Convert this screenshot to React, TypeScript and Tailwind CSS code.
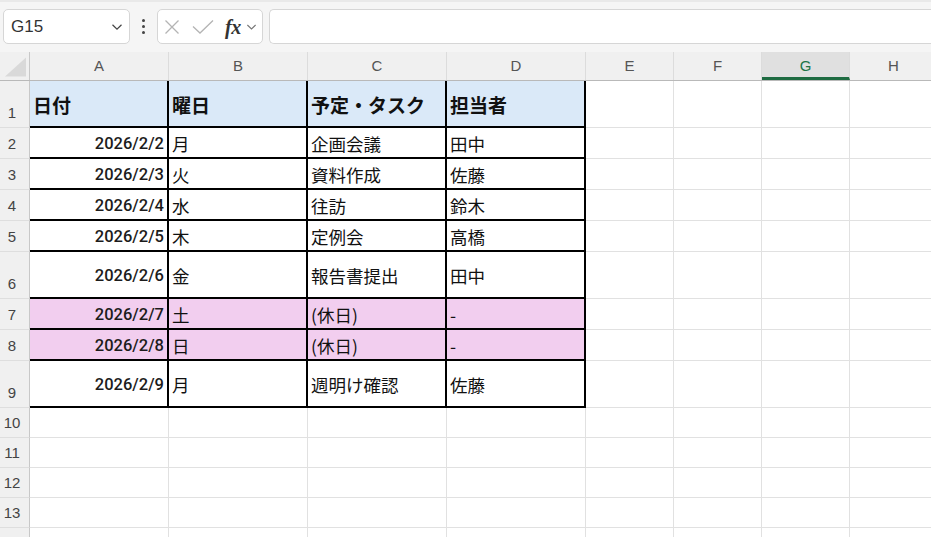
import React from 'react';

const cols = [
    { name: 'A', w: 'w-[139px]' },
    { name: 'B', w: 'w-[139px]' },
    { name: 'C', w: 'w-[139px]' },
    { name: 'D', w: 'w-[139px]' },
    { name: 'E', w: 'w-[88px]' },
    { name: 'F', w: 'w-[88px]' },
    { name: 'G', w: 'w-[88px]' },
    { name: 'H', w: 'w-[88px]' },
];

type Row = { h: string; label?: string; cells?: string[]; kind?: 'head' | 'holiday' | 'data' };

const rows: Row[] = [
    { h: 'h-[47px]', label: '1', kind: 'head', cells: ['日付', '曜日', '予定・タスク', '担当者'] },
    { h: 'h-[31px]', label: '2', kind: 'data', cells: ['2026/2/2', '月', '企画会議', '田中'] },
    { h: 'h-[31px]', label: '3', kind: 'data', cells: ['2026/2/3', '火', '資料作成', '佐藤'] },
    { h: 'h-[31px]', label: '4', kind: 'data', cells: ['2026/2/4', '水', '往訪', '鈴木'] },
    { h: 'h-[31px]', label: '5', kind: 'data', cells: ['2026/2/5', '木', '定例会', '高橋'] },
    { h: 'h-[47px]', label: '6', kind: 'data', cells: ['2026/2/6', '金', '報告書提出', '田中'] },
    { h: 'h-[31px]', label: '7', kind: 'holiday', cells: ['2026/2/7', '土', '(休日)', '-'] },
    { h: 'h-[31px]', label: '8', kind: 'holiday', cells: ['2026/2/8', '日', '(休日)', '-'] },
    { h: 'h-[47px]', label: '9', kind: 'data', cells: ['2026/2/9', '月', '週明け確認', '佐藤'] },
    { h: 'h-[30px]', label: '10' },
    { h: 'h-[30px]', label: '11' },
    { h: 'h-[30px]', label: '12' },
    { h: 'h-[30px]', label: '13' },
    { h: 'h-[30px]' },
];

const jp = "font-['Noto_Sans_CJK_JP',sans-serif]";

function Chevron({ className }: { className?: string }) {
    return (
        <svg viewBox="0 0 12 8" className={className} fill="none" stroke="currentColor" strokeWidth="1.2">
            <path d="M1.5 1.8 6 6.2 10.5 1.8" />
        </svg>
    );
}

function FormulaBar() {
    return (
        <div className="h-[52px] bg-[#f5f5f5] border-t-[2px] border-[#e9e9e9] flex items-center pl-[3px] pb-[1px]">
            {/* Name box */}
            <div className="w-[127px] h-[35px] bg-white border border-[#d6d6d6] rounded-[5px] flex items-center justify-between pl-[7px] pr-[6px]">
                <span className="text-[17px] text-[#333] font-['Liberation_Sans',sans-serif]">G15</span>
                <Chevron className="w-[12px] h-[8px] text-[#444]" />
            </div>
            {/* More dots */}
            <div className="w-[27px] flex flex-col items-center gap-[3px]">
                <span className="w-[3px] h-[3px] bg-[#444] rounded-full" />
                <span className="w-[3px] h-[3px] bg-[#444] rounded-full" />
                <span className="w-[3px] h-[3px] bg-[#444] rounded-full" />
            </div>
            {/* Cancel / enter / fx */}
            <div className="w-[106px] h-[35px] bg-white border border-[#d6d6d6] rounded-[5px] flex items-center pl-[6px]">
                <svg viewBox="0 0 16 16" className="w-[16px] h-[16px] text-[#b4b4b4]" fill="none" stroke="currentColor" strokeWidth="1.3">
                    <path d="M1.5 1.5 14.5 14.5M14.5 1.5 1.5 14.5" />
                </svg>
                <svg viewBox="0 0 22 16" className="w-[22px] h-[16px] ml-[12px] text-[#b4b4b4]" fill="none" stroke="currentColor" strokeWidth="1.3">
                    <path d="M1 7.5 8 14 21 1.5" />
                </svg>
                <span className="ml-[11px] text-[20px] leading-none italic font-bold text-[#333] font-['Liberation_Serif',serif] tracking-[-0.5px]">fx</span>
                <Chevron className="w-[11px] h-[8px] ml-[5px] text-[#777]" />
            </div>
            {/* Formula input */}
            <div className="flex-1 h-[35px] ml-[6px] bg-white border border-r-0 border-[#d6d6d6] rounded-l-[5px]" />
        </div>
    );
}

export default function App() {
    return (
        <div className="w-[931px] h-[537px] overflow-hidden bg-white font-['Liberation_Sans',sans-serif]">
            <FormulaBar />

            {/* Column headers */}
            <div className="flex h-[29px] bg-[#f0f0f0] border-b border-[#b9b9b9]">
                <div className="w-[30px] shrink-0 border-r border-[#c8c8c8] relative">
                    <svg viewBox="0 0 22 20" className="absolute right-[3px] bottom-[3px] w-[21px] h-[20px]">
                        <path d="M22 0 22 20 0 20Z" fill="#d9d9d9" />
                    </svg>
                </div>
                {cols.map(c => (
                    <div
                        key={c.name}
                        className={`${c.w} shrink-0 flex items-center justify-center text-[15px] border-r border-[#dcdcdc] ${c.name === 'G'
                            ? 'bg-[#e0e0e0] text-[#217346] border-b-[3px] border-b-[#1e6b41] pt-[3px]'
                            : 'text-[#555]'
                            }`}
                    >
                        {c.name}
                    </div>
                ))}
            </div>

            {/* Rows */}
            {rows.map((r, i) => (
                <div key={i} className={`flex ${r.h}`}>
                    <div className="w-[30px] shrink-0 bg-[#f0f0f0] border-r border-[#c8c8c8] border-b border-b-[#dedede] flex items-end justify-center pr-[5px] pb-[7px] text-[15px] leading-none text-[#444]">
                        {r.label}
                    </div>
                    {cols.map((c, ci) => {
                        const inTable = r.cells && ci < 4;
                        if (!inTable) {
                            return <div key={c.name} className={`${c.w} shrink-0 border-r border-b border-[#e1e1e1]`} />;
                        }
                        const text = r.cells![ci];
                        const bg = r.kind === 'head' ? 'bg-[#dae9f8]' : r.kind === 'holiday' ? 'bg-[#f2ceef]' : 'bg-white';
                        const isDate = r.kind !== 'head' && ci === 0;
                        return (
                            <div
                                key={c.name}
                                className={`${c.w} shrink-0 border-r-2 border-b-2 border-black ${bg} flex items-center pt-[3px] ${isDate ? 'justify-end pr-[3px]' : 'pl-[3px]'}`}
                            >
                                {isDate ? (
                                    <span className="text-[16.5px] font-medium text-[#1c1c1c] font-['Roboto',sans-serif]">{text}</span>
                                ) : r.kind === 'head' ? (
                                    <span className={`${jp} text-[19px] font-bold text-[#111]`}>{text}</span>
                                ) : (
                                    <span className={`${jp} text-[17.5px] text-[#111]`}>{text}</span>
                                )}
                            </div>
                        );
                    })}
                </div>
            ))}
        </div>
    );
}
